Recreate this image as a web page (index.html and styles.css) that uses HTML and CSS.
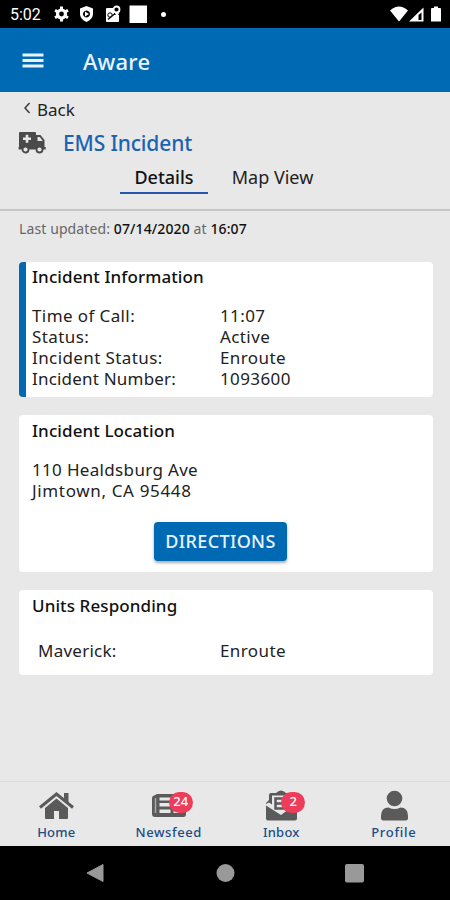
FILE: index.html
```html
<!DOCTYPE html>
<html lang="en">
<head>
<meta charset="utf-8">
<title>Aware</title>
<link rel="stylesheet" href="styles.css">
</head>
<body>
<div class="phone">
  <div class="status">
    <span class="clock">5:02</span>
    <svg class="status-left" width="108" height="20" viewBox="0 0 108 20" fill="#fff">
      <g transform="translate(8.500 10)"><circle r="4" fill="none" stroke="#fff" stroke-width="3.200"/><path d="M-1.500-7.500h3v3h-3zM-1.500 4.500h3v3h-3z"/><path d="M-1.500-7.500h3v3h-3zM-1.500 4.500h3v3h-3z" transform="rotate(60)"/><path d="M-1.500-7.500h3v3h-3zM-1.500 4.500h3v3h-3z" transform="rotate(120)"/></g>
      <path fill-rule="evenodd" d="M33.500 2l6.500 2.500v5c0 4-2.500 6.500-6.500 8.500-4-2-6.500-4.500-6.500-8.500v-5zM33.500 6.500a3.500 3.500 0 1 0 .01 0z"/><path d="M32 7.500l4 2.500-4 2.500z"/>
      <path d="M54 4h7v7h5v6q0 1-1 1H54q-1 0-1-1V5q0-1 1-1z"/><circle cx="63.500" cy="5.500" r="3" stroke="#fff" fill="#000" stroke-width="1.800"/><path d="M61.500 8.500L64 13l2-4z"/><circle cx="57" cy="11" r="2.200" fill="none" stroke="#000"/><path d="M55 15.500l7-6" stroke="#000" stroke-width="1.200"/>
      <path d="M76.500 1.500h17.500v17.500H76.500z"/>
    </svg>
    <span class="dot"></span>
    <svg class="status-right" width="52" height="17" viewBox="0 0 52 17" fill="#fff"><path d="M0 4.500Q9-3.500 18 4.500L9 15.500z"/><path fill-rule="evenodd" d="M19 15.500L33.500 1.500v14zM28.500 9v5h3V6.500z"/><path d="M41 3q0-1 1-1h2V.5h4V2h2q1 0 1 1v12.500H41z"/></svg>
  </div>
  <header class="appbar">
    <svg width="22" height="16" viewBox="0 0 22 16"><path d="M.5 2h21M.5 7.500h21M.5 13h21" stroke="#eaf2ff" stroke-width="2.800"/></svg>
    <span class="brand">Aware</span>
  </header>
  <section class="heading">
    <div class="back"><svg width="8" height="12" viewBox="0 0 8 12"><path d="M6.500 1L2 6l4.500 5" fill="none" stroke="#333" stroke-width="1.400"/></svg><span>Back</span></div>
    <div class="title">
      <svg width="28" height="23" viewBox="0 0 28 23"><path fill="#4a4a4a" d="M2 1h15q1 0 1 1v2h4.500l4 5v7h1.200v2.500H.6V16H1V2q0-1 1-1z"/><path d="M19.500 6h2.300l3 4h-5.300z" fill="#e8e8e8"/><path d="M9 3.800v8M5 7.800h8" stroke="#e8e8e8" stroke-width="2.600"/><circle cx="7.500" cy="18.500" r="3" fill="#e8e8e8" stroke="#4a4a4a" stroke-width="1.800"/><circle cx="21.500" cy="18.500" r="3" fill="#e8e8e8" stroke="#4a4a4a" stroke-width="1.800"/></svg>
      <h1>EMS Incident</h1>
    </div>
    <nav class="tabs"><span class="tab active">Details</span><span class="tab">Map View</span></nav>
  </section>
  <main class="content">
    <p class="updated">Last updated: <b>07/14/2020</b> at <b>16:07</b></p>
    <section class="card info">
      <h2>Incident Information</h2>
      <dl>
        <dt>Time of Call:</dt><dd>11:07</dd>
        <dt>Status:</dt><dd>Active</dd>
        <dt>Incident Status:</dt><dd>Enroute</dd>
        <dt class="number">Incident Number:</dt><dd>1093600</dd>
      </dl>
    </section>
    <section class="card location">
      <h2>Incident Location</h2>
      <p class="address">110 Healdsburg Ave<br><span class="city">Jimtown, CA 95448</span></p>
      <button class="directions">DIRECTIONS</button>
    </section>
    <section class="card units">
      <h2>Units Responding</h2>
      <dl><dt class="unit">Maverick:</dt><dd>Enroute</dd></dl>
    </section>
  </main>
  <nav class="bottom">
    <a class="item"><span class="icon"><svg width="36" height="32" viewBox="0 0 36 32" fill="#5a5a5a"><path fill-rule="evenodd" d="M18.500 9.500L30 19v10q0 1-1 1H8q-1 0-1-1V19zM16 22v8h5v-8z"/><path d="M2 18.500L18.500 5 35 18.500" fill="none" stroke="#5a5a5a" stroke-width="3"/><path d="M26 4h4.500v10L26 10.500z"/></svg></span><span class="label">Home</span></a>
    <a class="item"><span class="icon"><svg width="36" height="32" viewBox="0 0 36 32"><path d="M6 5h29v20q0 3-2.500 3H4q-3 0-3-3V9q0-2 2-2.500z" fill="#5a5a5a"/><path d="M4.500 9v15" stroke="#aaa" stroke-width="1.500"/><path d="M8.500 8.500h11v3h-11zM8.500 14h11v3.500h-11zM8.500 20.500h11v3.500h-11zM22.500 21.500h9v2.500h-9z" fill="#e8e8e8"/></svg><span class="badge">24</span></span><span class="label wide">Newsfeed</span></a>
    <a class="item"><span class="icon"><svg width="36" height="32" viewBox="0 0 36 32"><path d="M3 14l3-3V6q0-2 2-2h5q5-5 10 0h5q2 0 2 2v5l4 4v14.500q0 2-2 2H5q-2 0-2-2z" fill="#5a5a5a"/><path d="M9 6.500h19v12L18 26 3 16.500v-1.500l3-1.500 3 2z" fill="#e8e8e8"/><path d="M21 9.500h-8.500v10H21M12.500 14.500H20" fill="none" stroke="#5a5a5a" stroke-width="2.500"/></svg><span class="badge">2</span></span><span class="label">Inbox</span></a>
    <a class="item"><span class="icon"><svg width="36" height="32" viewBox="0 0 36 32" fill="#5a5a5a"><circle cx="18.500" cy="9.500" r="7.800"/><path d="M5 29v-2q0-8.500 7.500-8.500 6 3 12 0 7.500 0 7.500 8.500v2q0 2.500-2.500 2.500h-22Q5 31.500 5 29z"/></svg></span><span class="label profile">Profile</span></a>
  </nav>
  <div class="android">
    <svg width="19" height="20" viewBox="0 0 19 20"><path d="M1 10L17 1.500v17z" fill="#999" stroke="#999" stroke-linejoin="round"/></svg>
    <svg width="19" height="20" viewBox="0 0 19 20"><circle cx="9.500" cy="10" r="9" fill="#999"/></svg>
    <svg width="19" height="20" viewBox="0 0 19 20"><rect x="0" y="1" width="19" height="18.500" rx="2" fill="#999"/></svg>
  </div>
</div>
</body>
</html>
```
FILE: styles.css
```css
* { box-sizing: border-box; }
body, h1, h2, p, dl, dd { margin: 0; }
body { font-family: "Noto Sans", sans-serif; color: #222; }
.phone { width: 450px; height: 900px; display: flex; flex-direction: column; background: #e8e8e8; overflow: hidden; }
.status { height: 28px; background: #000; color: #fff; display: flex; align-items: center; padding: 0 8px 0 10px; }
.clock { font: 16px/28px Roboto, sans-serif; width: 43px; padding-top: 2px; }
.dot { width: 5px; height: 5px; border-radius: 50%; background: #fff; }
.status-right { margin-left: auto; }
.appbar { height: 64px; background: #0069b3; display: flex; align-items: center; padding: 1px 22px 0; gap: 39px; }
.brand { color: #edf3ff; font-size: 22px; font-weight: 500; letter-spacing: .2px; }
.heading { height: 119px; border-bottom: 2px solid #c6c6c6; padding: 6px 0 0 18px; }
.back { display: flex; align-items: center; gap: 6px; height: 22px; padding-left: 5px; font-size: 17px; }
.back svg { margin-top: -2px; }
.title { display: flex; align-items: center; gap: 17px; height: 45px; }
h1 { font-size: 21px; font-weight: 500; color: #1c62b2; letter-spacing: -.15px; }
.tabs { display: flex; height: 30px; margin: -1px 0 0 102px; gap: 12px; }
.tab { width: 88px; display: flex; justify-content: center; font-size: 18px; line-height: 27px; white-space: nowrap; }
.tab:last-child { width: 105px; }
.active { border-bottom: 2px solid #2455a8; font-weight: 500; color: #111; }
.content { flex: 1; padding: 8px 17px 0 19px; }
.updated { font-size: 14px; line-height: 20px; color: #666; margin-bottom: 23px; white-space: nowrap; letter-spacing: .11px; }
.updated b { color: #111; font-weight: 500; }
.card { background: #fff; border-radius: 4px; padding: 4px 0 0 13px; margin-bottom: 18px; }
.info { height: 135px; border-left: 7px solid #0768b2; padding: 3px 0 0 6px; }
.location { height: 157px; }
.units { height: 85px; }
h2 { font-size: 17px; line-height: 24px; font-weight: 500; color: #111; letter-spacing: .1px; }
dl { display: grid; grid-template-columns: 188px 1fr; font-size: 17px; line-height: 21px; padding-top: 16px; white-space: nowrap; letter-spacing: .4px; }
.units dl { padding-top: 22px; }
.unit { padding-left: 6px; letter-spacing: .25px; }
.number { letter-spacing: .2px; }
.address { font-size: 17px; line-height: 21px; padding-top: 16px; letter-spacing: .33px; }
.city { letter-spacing: .65px; }
.directions { display: block; width: 133px; height: 39px; margin: 21px 0 0 122px; padding: 0 0 1px; border: 0; border-radius: 4px; background: #0069b3; color: #e9f2ff; font: 500 18px "Noto Sans", sans-serif; letter-spacing: .35px; box-shadow: 0 2px 3px #0005; }
.bottom { height: 65px; border-top: 1px solid #dadada; display: grid; grid-template-columns: repeat(4, 1fr); padding-top: 7px; }
.item { display: flex; flex-direction: column; align-items: center; color: #1b4c86; font-size: 13px; font-weight: 500; line-height: 18px; }
.label { letter-spacing: .2px; }
.wide { letter-spacing: .6px; }
.profile { letter-spacing: .7px; }
.icon { position: relative; height: 34px; }
.badge { position: absolute; left: 18px; top: 3px; width: 24px; height: 21px; border-radius: 11px; background: #ee3c5b; color: #fff; font-size: 13px; line-height: 19px; text-align: center; }
.android { height: 54px; background: #000; display: flex; align-items: center; justify-content: space-between; padding: 0 86px; }
```
